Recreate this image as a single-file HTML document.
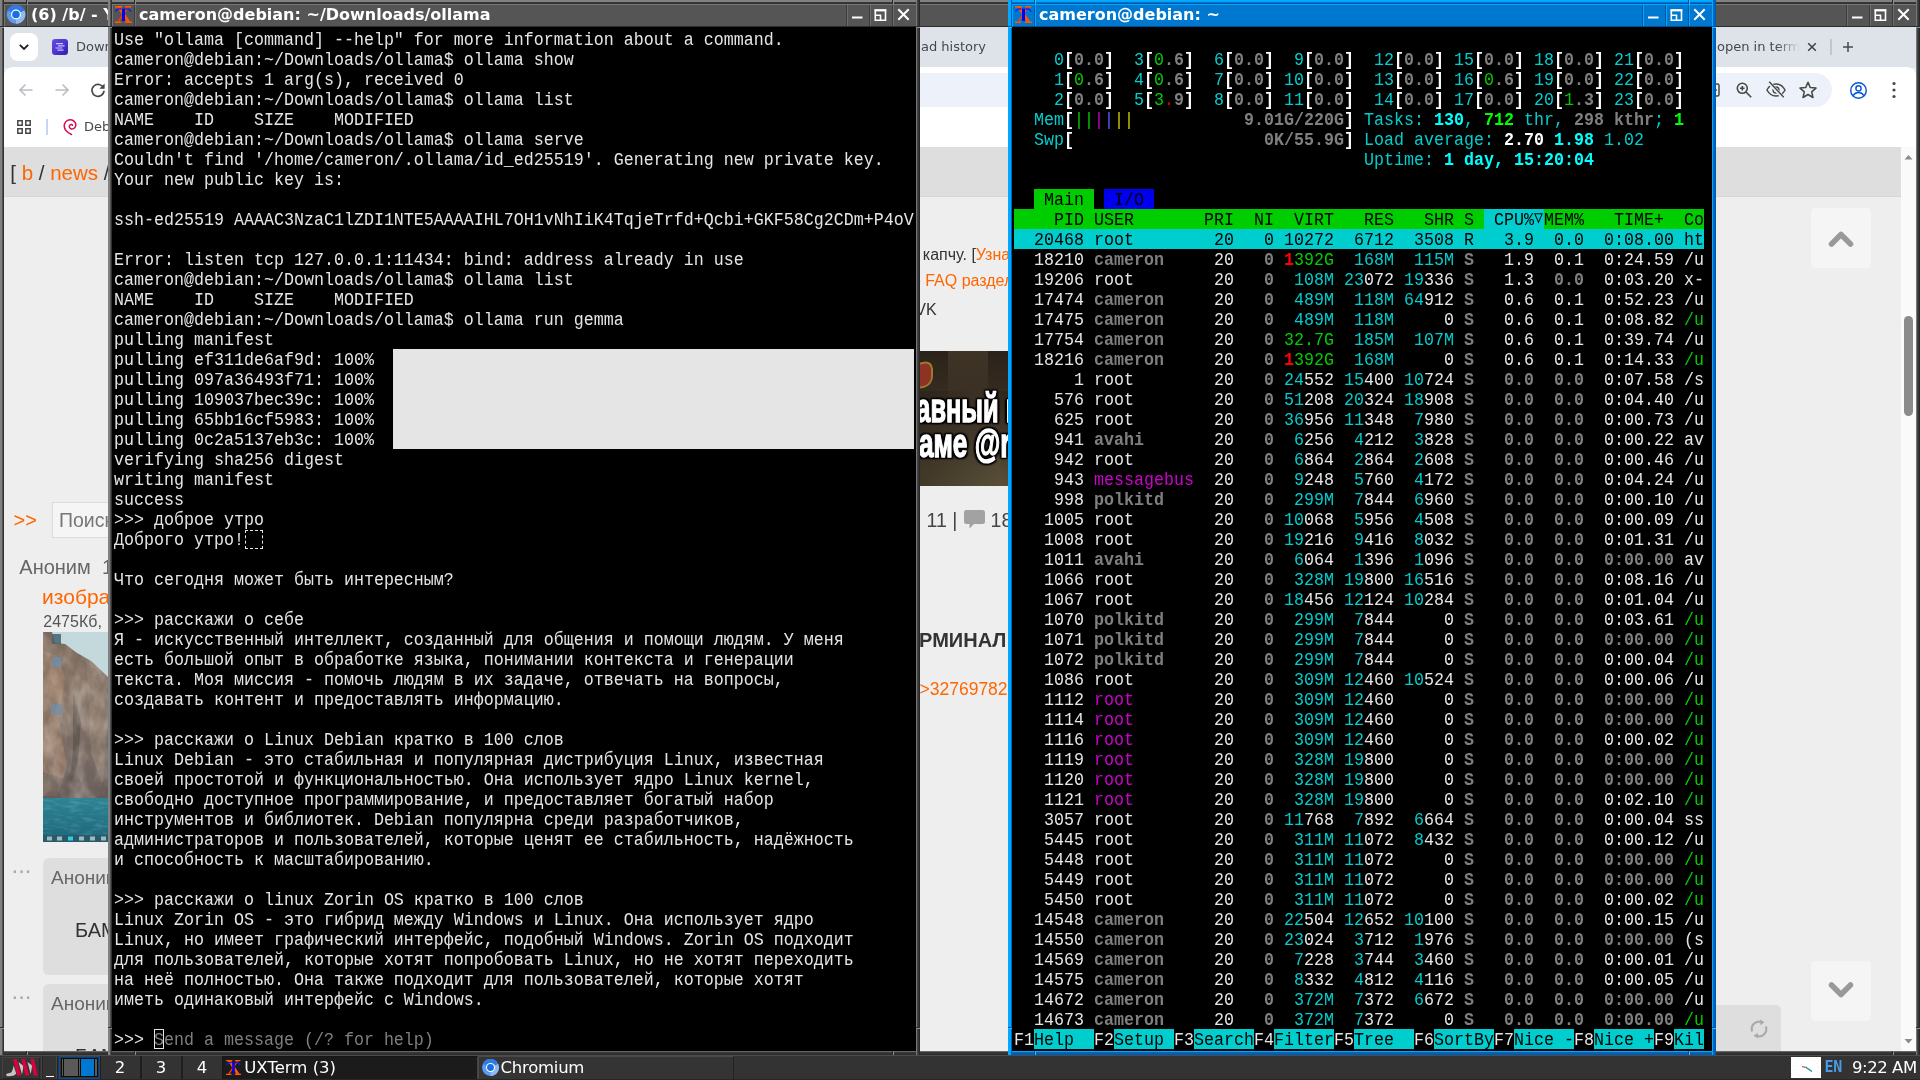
<!DOCTYPE html>
<html lang="ru">
<head>
<meta charset="utf-8">
<title>desktop</title>
<style>
*{box-sizing:border-box;margin:0;padding:0}
html,body{width:1920px;height:1080px;overflow:hidden;background:#333}
body{position:relative;font-family:"DejaVu Sans","Liberation Sans",sans-serif}
.abs{position:absolute}
/* ---------- window manager frames ---------- */
.win{position:absolute;top:0;height:1055px}
.win .fr{position:absolute;left:0;top:0;right:0;bottom:0;background:#555}
.win .fr i{position:absolute;display:block}
/* inactive frame pieces */
.fl{left:0;top:0;bottom:0;width:4px;background:linear-gradient(90deg,#838383 0,#808080 2px,#555 2.4px,#222 4px)}
.frr{right:0;top:0;bottom:0;width:4px;background:linear-gradient(90deg,#7a7a7a 0,#777 1.2px,#444 1.4px,#222 4px)}
.ft{left:0;top:0;right:0;height:4px;background:linear-gradient(180deg,#838383 0,#808080 1.800px,#3a3a3a 2.500px,#2b2b2b 4px)}
.fb{left:0;bottom:0;right:0;height:4px;background:linear-gradient(180deg,#666 0,#666 1px,#3a3a3a 1.3px,#2a2a2a 4px)}
.win.act .fr{background:#0078d2}
.win.act .fl{background:linear-gradient(90deg,#00aaff 0,#00a8ff 2.6px,#0068c0 3px,#0058ac 4px)}
.win.act .frr{background:linear-gradient(90deg,#00aaff 0,#00a8ff 1.2px,#0068c0 1.500px,#0058ac 4px)}
.win.act .ft{background:linear-gradient(180deg,#00aaff 0,#00a8ff 2.200px,#0060b8 2.600px,#0054a8 4px)}
.win.act .fb{background:linear-gradient(180deg,#00a8ff 0,#00a8ff 1px,#0068c0 1.300px,#0058ac 4px)}
.fr i::before,.fr i::after{content:"";position:absolute}
.ft::before,.ft::after,.fb::before,.fb::after{top:0;width:2px;height:4px;background:linear-gradient(90deg,#2b2b2b 50%,#8c8c8c 50%)}
.ft::before,.fb::before{left:26px}.ft::after,.fb::after{right:26px}
.fl::before,.fl::after,.frr::before,.frr::after{left:0;width:4px;height:2px;background:linear-gradient(180deg,#2b2b2b 50%,#8c8c8c 50%)}
.fl::before,.frr::before{top:26px}.fl::after,.frr::after{bottom:26px}
.win.act .ft::before,.win.act .ft::after,.win.act .fb::before,.win.act .fb::after{background:linear-gradient(90deg,#0054a8 50%,#35b8ff 50%)}
.win.act .fl::before,.win.act .fl::after,.win.act .frr::before,.win.act .frr::after{background:linear-gradient(180deg,#0054a8 50%,#35b8ff 50%)}
.tb{position:absolute;left:4px;right:4px;top:4px;height:23px;background:#555;border-top:1px solid #777;border-left:1px solid #777;border-bottom:1px solid #2b2b2b;color:#fff;font:bold 16px/21px "DejaVu Sans",sans-serif;white-space:nowrap;overflow:hidden;will-change:transform}
.win.act .tb{background:#0078d0;border-top-color:#00a6fa;border-left-color:#00a6fa;border-bottom-color:#004f94}
.tb .ic{position:absolute;left:.700px;top:-1px;width:21px;height:21px}
.tb .ic.x{left:2px;top:1px;width:17px;height:17px}
.tb .sep{position:absolute;top:0;bottom:0;width:2px;border-left:1px solid #3c3c3c;border-right:1px solid #6c6c6c}
.win.act .tb .sep{border-left-color:#0058a4;border-right-color:#00a6fa}
.tb .tt{position:absolute;left:26px;top:-1px}
.tb .btn{position:absolute;top:0;width:23px;height:21px}
.tb .btn svg{position:absolute;left:0;top:0}
/* ---------- terminals ---------- */
.term{position:absolute;left:4px;top:27px;right:4px;bottom:4px;background:#000;overflow:hidden;color:#e5e5e5;
 font:16.664px/20px "Liberation Mono","DejaVu Sans Mono",monospace;white-space:pre}
.term .in{position:absolute;left:2px;top:2px;right:0;bottom:0;will-change:transform}
.r{position:absolute;left:0;height:20px;width:820px;transform-origin:0 14.4px;transform:translateY(1.6px) scaleY(1.15)}
.ht .r span{position:absolute;top:0}
.g{color:#7f7f7f}
.G{color:#7f7f7f;font-weight:bold}
.c{color:#00cdcd}
.C{color:#00ffff;font-weight:bold}
.W{color:#fff;font-weight:bold}
.gr{color:#00cd00}
.GR{color:#00ff00;font-weight:bold}
.rd{color:#cd0000}
.RD{color:#ff0000;font-weight:bold}
.mg{color:#cd00cd}
.bl{color:#5c5cff}
.yl{color:#cdcd00}
.k,.k span{color:#000}
.fk{color:#e5e5e5}
.tri{font-size:15px}
.bg{position:absolute;height:20px}
.gbg{background:#00cd00}
.bbg{background:#0000ee}
.cbg{background:#00cdcd}
.pbar{position:absolute;left:279px;top:320px;width:521px;height:100px;background:#e5e5e5}
.ubox{position:absolute;left:131px;top:501px;width:18px;height:18.500px;border:1px dashed #e5e5e5}
.cur{position:absolute;left:40px;top:1000px;width:10px;height:20px;border:1px solid #e5e5e5}
.ui{font:13px/17px "DejaVu Sans","Liberation Sans",sans-serif;color:#45484d;white-space:nowrap}
.pt{font-family:"Liberation Sans",sans-serif;white-space:nowrap}
.o{color:#ff6600}
.meme{font:bold 40px/40px "Liberation Sans",sans-serif;color:#fff;white-space:nowrap;transform-origin:0 0;-webkit-text-stroke:1.4px #fff;text-shadow:-3px 0 2px #000,3px 0 2px #000,0 -2px 2px #000,0 2px 2px #000,3px 2px 2px #000,-3px -2px 2px #000,3px -2px 2px #000,-3px 2px 2px #000}
.tk{top:1px;font:16.5px/24px "DejaVu Sans",sans-serif;color:#fff;white-space:nowrap}
</style>
</head>
<body>

<!-- ======================= Chromium window (behind) ======================= -->
<div class="win" id="w-chromium" style="left:0;width:1920px">
 <div class="fr"><i class="ft"></i><i class="fb"></i><i class="fl"></i><i class="frr"></i></div>
 <div class="tb">
  <svg class="ic" viewBox="0 0 21 21"><circle cx="10" cy="10.5" r="9.3" fill="#5b9cf0"/><path d="M10 10.5 L1.5 6.5 A9.3 9.3 0 0 1 18.5 6.5 Z" fill="#2f7be5"/><path d="M10 10.5 L18.5 6.5 A9.3 9.3 0 0 1 10 19.8 Z" fill="#8db9f5"/><circle cx="10" cy="10.5" r="5" fill="#fff"/><circle cx="10" cy="10.5" r="3.8" fill="#1a6fe0"/></svg>
  <span class="sep" style="left:21px"></span>
  <span class="tt">(6) /b/ - Yoba</span>
  <span class="sep" style="left:1841px"></span>
  <span class="btn" style="left:1843px"><svg width="23" height="21" viewBox="0 0 23 21"><path d="M4 12.5h10.500" stroke="#fff" stroke-width="2"/></svg></span>
  <span class="sep" style="left:1864px"></span>
  <span class="btn" style="left:1866px"><svg width="23" height="21" viewBox="0 0 23 21"><path d="M4.300 5.300h10.200v10h-10.200zM4.300 10.300h5.200v5" fill="none" stroke="#fff" stroke-width="1.600"/><path d="M3.500 5.300h11.800" stroke="#fff" stroke-width="2.200"/></svg></span>
  <span class="sep" style="left:1887px"></span>
  <span class="btn" style="left:1889px"><svg width="23" height="21" viewBox="0 0 23 21"><path d="M4.300 4.300l10.400 10.400M14.700 4.300L4.300 14.700" stroke="#fff" stroke-width="2"/></svg></span>
 </div>
 <div class="abs" id="chrome" style="left:4px;top:27px;width:1912px;height:1024px;background:#eee;overflow:hidden;will-change:transform">
<div class="abs pg" style="left:-4px;top:-27px;width:1920px;height:1080px">
 <!-- tab strip -->
 <div class="abs" style="left:4px;top:27px;width:1912px;height:41px;background:#dee3ea"></div>
 <div class="abs" style="left:10px;top:33px;width:28px;height:28px;border-radius:8px;background:#fff"></div>
 <svg class="abs" style="left:10px;top:33px" width="28" height="28" viewBox="0 0 28 28"><path d="M9.8 11.8l4.2 4.2 4.2-4.2" fill="none" stroke="#1f1f1f" stroke-width="1.8"/></svg>
 <svg class="abs" style="left:52px;top:39px" width="16" height="16" viewBox="0 0 16 16"><defs><linearGradient id="fv" x1="0" y1="0" x2="1" y2="1"><stop offset="0" stop-color="#6a4be8"/><stop offset="1" stop-color="#2f1fb4"/></linearGradient></defs><rect width="16" height="16" rx="3.2" fill="url(#fv)"/><path d="M4 4.6h7M6 6.8h6.5M3.5 9h7M5.5 11.2h6" stroke="#c9c0ff" stroke-width="1.2"/></svg>
 <div class="abs ui" style="left:76px;top:37.800px">Down</div>
 <div class="abs ui" style="left:921px;top:37.700px">ad history</div>
 <div class="abs ui" style="left:1717px;top:37.700px;width:86px;overflow:hidden">open in terminal</div>
 <div class="abs" style="left:1776px;top:36px;width:28px;height:22px;background:linear-gradient(90deg,rgba(222,227,234,0),#dee3ea 85%)"></div>
 <svg class="abs" style="left:1806px;top:41px" width="12" height="12" viewBox="0 0 12 12"><path d="M2.2 2.2l7.6 7.6M9.8 2.2L2.2 9.8" stroke="#3c4043" stroke-width="1.5"/></svg>
 <div class="abs" style="left:1830px;top:39px;width:2px;height:16px;background:#c6c5c3"></div>
 <svg class="abs" style="left:1842px;top:41px" width="12" height="12" viewBox="0 0 12 12"><path d="M6 1v10M1 6h10" stroke="#474a4d" stroke-width="1.500"/></svg>
 <!-- toolbar -->
 <div class="abs" style="left:4px;top:67px;width:1912px;height:80px;background:#fff;border-radius:9px 9px 0 0"></div>
 <svg class="abs" style="left:16px;top:80px" width="20" height="20" viewBox="0 0 20 20"><path d="M16.5 10H4.5M9.5 4.5L4 10l5.500 5.500" fill="none" stroke="#bcbfc4" stroke-width="1.7"/></svg>
 <svg class="abs" style="left:52px;top:80px" width="20" height="20" viewBox="0 0 20 20"><path d="M3.500 10h12M10.500 4.500L16 10l-5.500 5.500" fill="none" stroke="#bcbfc4" stroke-width="1.7"/></svg>
 <svg class="abs" style="left:88px;top:80px" width="20" height="20" viewBox="0 0 20 20"><path d="M15.600 8.200A6 6 0 1 0 16 10.800" fill="none" stroke="#474747" stroke-width="1.7"/><path d="M16.600 3.600v5.200h-5.200z" fill="#474747"/></svg>
 <div class="abs" style="left:130px;top:73px;width:1702px;height:34px;border-radius:17px;background:#edf2fa"></div>
 <svg class="abs" style="left:1712px;top:81px" width="10" height="18" viewBox="0 0 10 18"><rect x="-4" y="3" width="11" height="12" rx="1.5" fill="none" stroke="#474747" stroke-width="1.5"/><path d="M1 9h4" stroke="#474747" stroke-width="1.5"/></svg>
 <svg class="abs" style="left:1734px;top:80px" width="20" height="20" viewBox="0 0 20 20"><circle cx="8.300" cy="8.300" r="5" fill="none" stroke="#474747" stroke-width="1.6"/><path d="M12 12l5.200 5.200M8.300 6v4.600M6 8.300h4.600" stroke="#474747" stroke-width="1.6"/></svg>
 <svg class="abs" style="left:1765px;top:80px" width="22" height="20" viewBox="0 0 24 22"><path d="M2 11c2.500-4.500 6-6.500 10-6.500s7.500 2 10 6.500c-2.500 4.500-6 6.500-10 6.500S4.500 15.500 2 11z" fill="none" stroke="#474747" stroke-width="1.6"/><circle cx="12" cy="11" r="3.200" fill="none" stroke="#474747" stroke-width="1.6"/><path d="M4 2.500l16 17" stroke="#edf2fa" stroke-width="4"/><path d="M4.500 2l16 17" stroke="#474747" stroke-width="1.6"/></svg>
 <svg class="abs" style="left:1798px;top:80px" width="20" height="20" viewBox="0 0 20 20"><path d="M10 2.300l2.300 5.300 5.700.5-4.300 3.800 1.300 5.600L10 14.500 5 17.500l1.300-5.600L2 8.100l5.700-.5z" fill="none" stroke="#474747" stroke-width="1.5" stroke-linejoin="round"/></svg>
 <svg class="abs" style="left:1848.500px;top:80.500px" width="19" height="19" viewBox="0 0 22 22"><circle cx="11" cy="11" r="9" fill="none" stroke="#0b57d0" stroke-width="1.7"/><circle cx="11" cy="8.600" r="3" fill="none" stroke="#0b57d0" stroke-width="1.7"/><path d="M4.800 17c1.500-2.500 3.700-3.600 6.200-3.600s4.700 1.100 6.200 3.600" fill="none" stroke="#0b57d0" stroke-width="1.700"/></svg>
 <svg class="abs" style="left:1890px;top:80px" width="8" height="20" viewBox="0 0 8 20"><circle cx="4" cy="3.500" r="1.600" fill="#474747"/><circle cx="4" cy="10" r="1.600" fill="#474747"/><circle cx="4" cy="16.500" r="1.600" fill="#474747"/></svg>
 <!-- bookmarks bar -->
 <svg class="abs" style="left:17px;top:120px" width="14" height="14" viewBox="0 0 14 14"><path d="M.8.800h4.400v4.400H.8zM8.800.800h4.400v4.400H8.800zM.8 8.800h4.400v4.400H.8zM8.800 8.800h4.400v4.400H8.800z" fill="none" stroke="#474747" stroke-width="1.5"/></svg>
 <div class="abs" style="left:46px;top:119px;width:2px;height:16px;background:#c7d6f7"></div>
 <svg class="abs" style="left:62px;top:118px" width="16" height="18" viewBox="0 0 16 18"><path d="M9.500 16.500C4 14 1.500 10 2.500 6 3.500 2.500 7 1 10 2c3 1 4.500 4 3.500 6.500-.8 2-3 3-4.800 2.200C7.200 10 6.800 8 8 7c.8-.7 2-.5 2.500.3" fill="none" stroke="#d70a53" stroke-width="1.500" stroke-linecap="round"/></svg>
 <div class="abs ui" style="left:84px;top:118px">Deb</div>
 <!-- page -->
 <div class="abs" style="left:4px;top:147px;width:1897px;height:50px;background:#dedede;border-bottom:1px solid #d6d6d6"></div>
 <div class="abs pt" style="left:10.300px;top:161.100px;font-size:20.500px;line-height:24px;color:#333">[ <span class="o">b</span> / <span class="o">news</span> / <span class="o">po</span></div>
 <!-- scrollbar -->
 <div class="abs" style="left:1901px;top:147px;width:15px;height:904px;background:#fafafa"></div>
 <svg class="abs" style="left:1901px;top:147px" width="15" height="20" viewBox="0 0 15 20"><path d="M3.500 12.500h8L7.500 8z" fill="#8b8b8b"/></svg>
 <svg class="abs" style="left:1901px;top:1031px" width="15" height="20" viewBox="0 0 15 20"><path d="M3.500 8h8L7.500 12.500z" fill="#8b8b8b"/></svg>
 <div class="abs" style="left:1904px;top:316px;width:9px;height:100px;border-radius:4.500px;background:#8b8b8b"></div>
 <!-- middle strip text -->
 <div class="abs pt" style="left:892.700px;top:244.500px;font-size:16px;line-height:20px;color:#333;width:300px">вве капчу. [<span class="o">Узнать</span>]</div>
 <div class="abs pt" style="left:915.400px;top:271.300px;font-size:16px;line-height:20px;color:#333;width:300px">- <span class="o">FAQ раздел</span></div>
 <div class="abs pt" style="left:905.500px;top:299.500px;font-size:16px;line-height:20px;color:#333;width:300px">- VK</div>
 <!-- middle image -->
 <div class="abs" style="left:820px;top:351px;width:260px;height:135px;overflow:hidden;background:linear-gradient(180deg,#2b2219 0,#352b20 30%,#453b2c 62%,#5a5039 100%)">
  <div class="abs" style="left:128px;top:0;width:40px;height:60px;background:linear-gradient(180deg,rgba(110,95,70,.3),rgba(110,95,70,0))"></div>
  <div class="abs" style="left:100px;top:40px;width:160px;height:95px;background:linear-gradient(75deg,rgba(20,15,10,.35) 0,rgba(20,15,10,0) 45%,rgba(25,20,12,.4) 75%,rgba(120,105,70,.25) 100%)"></div>
  <div class="abs" style="left:92px;top:11px;width:21px;height:26px;background:#8e3324;border:2px solid #9a7a30;border-radius:2px 9px 9px 2px;transform:skewY(-12deg)"></div>
  <div class="abs meme" style="left:67.100px;top:36.500px;transform:scaleX(.635)">Главный герой</div>
  <div class="abs meme" style="left:12.400px;top:72.400px;transform:scaleX(.654)">Телеграме @ru</div>
 </div>
 <div class="abs pt" style="left:926.600px;top:507.500px;font-size:19.500px;line-height:24px;color:#444">11 |</div>
 <svg class="abs" style="left:963px;top:509px" width="23" height="21" viewBox="0 0 23 21"><path d="M3.500 1h16a2.500 2.500 0 0 1 2.500 2.500v9a2.500 2.500 0 0 1-2.500 2.500H11l-4.500 4.500V15H3.500A2.500 2.500 0 0 1 1 12.500v-9A2.500 2.500 0 0 1 3.500 1z" fill="#a2a2a2"/></svg>
 <div class="abs pt" style="left:990.600px;top:507.500px;font-size:19.500px;line-height:24px;color:#444">18</div>
 <div class="abs pt" style="left:880px;top:628px;width:300px;font-size:20px;line-height:24px;color:#333;font-weight:bold"><span style="position:absolute;right:173.600px;top:-.500px;white-space:nowrap">ТЕРМИНАЛ</span></div>
 <div class="abs pt o" style="left:919.500px;top:678px;font-size:17.500px;line-height:22px">&gt;32769782</div>
 <!-- left strip -->
 <div class="abs pt o" style="left:13.500px;top:508px;font-size:20px;line-height:24px">&gt;&gt;</div>
 <div class="abs" style="left:52px;top:502px;width:300px;height:36px;background:#f5f5f5;border:1px solid #dcdcdc"></div>
 <div class="abs pt" style="left:59px;top:508px;font-size:19.500px;line-height:24px;color:#777">Поиск</div>
 <div class="abs pt" style="left:19.300px;top:555.400px;font-size:20px;line-height:24px;color:#666">Аноним&nbsp; 15</div>
 <div class="abs pt o" style="left:42.100px;top:586px;font-size:21px;line-height:22px">изображение</div>
 <div class="abs pt" style="left:43.300px;top:610.700px;font-size:16px;line-height:22px;color:#555">2475Кб,</div>
 <svg class="abs" style="left:43px;top:632px" width="160" height="210" viewBox="0 0 160 210">
  <defs>
   <linearGradient id="rk" x1="0" y1="0" x2="0" y2="1"><stop offset="0" stop-color="#857062"/><stop offset=".35" stop-color="#8f7c6d"/><stop offset=".7" stop-color="#80716a"/><stop offset="1" stop-color="#675d59"/></linearGradient>
   <linearGradient id="sea" x1="0" y1="0" x2="0" y2="1"><stop offset="0" stop-color="#2e8494"/><stop offset="1" stop-color="#1e6a7e"/></linearGradient>
   <filter id="nz" x="0" y="0" width="100%" height="100%"><feTurbulence type="fractalNoise" baseFrequency=".09 .05" numOctaves="3" seed="7"/><feColorMatrix type="matrix" values="0 0 0 0 .1  0 0 0 0 .08  0 0 0 0 .07  1.6 0 0 0 -.55"/></filter>
   <filter id="nz3" x="0" y="0" width="100%" height="100%"><feTurbulence type="fractalNoise" baseFrequency=".07 .04" numOctaves="3" seed="21"/><feColorMatrix type="matrix" values="0 0 0 0 .8  0 0 0 0 .72  0 0 0 0 .64  1.6 0 0 0 -.6"/></filter>
   <filter id="nz2" x="0" y="0" width="100%" height="100%"><feTurbulence type="fractalNoise" baseFrequency=".08 .3" numOctaves="2" seed="3"/><feColorMatrix type="matrix" values="0 0 0 0 .75  0 0 0 0 .95  0 0 0 0 1  1.2 0 0 0 -.55"/></filter>
  </defs>
  <rect width="160" height="210" fill="#c3d9dc"/>
  <path d="M0 0h9l3 11 10 1 12 9 14 8 17 16 20 20 30 10 45 20V170H0z" fill="url(#rk)"/>
  <path d="M0 18l14 6 8 22-6 40 8 50-10 28H0z" fill="#b08d72" opacity=".55"/>
  <path d="M30 60l8 30-4 50 10 26H26l4-50z" fill="#514944" opacity=".55"/>
  <path d="M44 40l14 12 7 40-5 60-12-30z" fill="#a3917f" opacity=".45"/>
  <path d="M0 140l30 10 35 8v12H0z" fill="#6d615b" opacity=".6"/>
  <rect width="160" height="166" filter="url(#nz)" opacity=".55" style="clip-path:polygon(0 0,9px 0,12px 11px,22px 12px,34px 21px,48px 29px,65px 45px,85px 65px,115px 75px,160px 95px,160px 166px,0 166px)"/>
  <rect width="160" height="166" filter="url(#nz3)" opacity=".5" style="clip-path:polygon(0 0,9px 0,12px 11px,22px 12px,34px 21px,48px 29px,65px 45px,85px 65px,115px 75px,160px 95px,160px 166px,0 166px)"/>
  <rect x="9" y="2" width="9" height="10" fill="#44626f" opacity=".85"/>
  <rect x="9" y="25" width="9" height="10" fill="#6c8fae" opacity=".75"/>
  <rect x="8" y="72" width="11" height="11" fill="#6c8fae" opacity=".65"/>
  <rect y="166" width="160" height="38" fill="url(#sea)"/>
  <rect y="166" width="160" height="38" filter="url(#nz2)" opacity=".35"/>
  <rect y="203" width="160" height="7" fill="#285a69"/>
  <path d="M4 206.500h5M14 206.500h5M36 206.500h5M47 206.500h5M58 206.500h5" stroke="#9fb9c0" stroke-width="4"/><path d="M25 206.500h5" stroke="#28d0e0" stroke-width="4"/>
 </svg>

 <div class="abs pt" style="left:11.500px;top:854.100px;font-size:24px;line-height:22px;color:#aaa">...</div>
 <div class="abs" style="left:43px;top:858px;width:640px;height:116.500px;border-radius:6px;background:#dedede"></div>
 <div class="abs pt" style="left:51px;top:867px;font-size:19px;line-height:22px;color:#666">Аноним</div>
 <div class="abs pt" style="left:75px;top:918px;font-size:20px;line-height:24px;color:#333">БАМП</div>
 <div class="abs pt" style="left:11.500px;top:980.300px;font-size:24px;line-height:22px;color:#aaa">...</div>
 <div class="abs" style="left:43px;top:984px;width:640px;height:116.500px;border-radius:6px;background:#dedede"></div>
 <div class="abs pt" style="left:51px;top:993px;font-size:19px;line-height:22px;color:#666">Аноним</div>
 <div class="abs pt" style="left:75px;top:1044px;font-size:20px;line-height:24px;color:#333">БАМП</div>
 <!-- right strip -->
 <div class="abs" style="left:1811px;top:208px;width:60px;height:60px;border-radius:4px;background:#f5f5f5"></div>
 <svg class="abs" style="left:1811px;top:208px" width="60" height="60" viewBox="0 0 60 60"><path d="M20.500 36L30 26.500l9.500 9.500" fill="none" stroke="#999" stroke-width="5.500" stroke-linecap="round" stroke-linejoin="round"/></svg>
 <div class="abs" style="left:1811px;top:961px;width:60px;height:60px;border-radius:4px;background:#f5f5f5"></div>
 <svg class="abs" style="left:1811px;top:961px" width="60" height="60" viewBox="0 0 60 60"><path d="M20.500 24L30 33.500l9.500-9.500" fill="none" stroke="#999" stroke-width="5.500" stroke-linecap="round" stroke-linejoin="round"/></svg>
 <div class="abs" style="left:1600px;top:1005px;width:181px;height:60px;border-radius:0 5px 0 0;background:#dedede"></div>
 <svg class="abs" style="left:1747px;top:1017px" width="24" height="24" viewBox="0 0 24 24"><path d="M5.200 14.500A7.200 7.200 0 0 1 14.500 5.200M18.800 9.500A7.200 7.200 0 0 1 9.500 18.800" fill="none" stroke="#aaa" stroke-width="2.200"/><path d="M13 2.500l4.500 2.700-4 3zM11 21.500l-4.500-2.700 4-3z" fill="#aaa"/></svg>
</div>

 </div>
</div>

<!-- ======================= left terminal (ollama) ======================= -->
<div class="win" id="w-ollama" style="left:108px;width:812px">
 <div class="fr"><i class="ft"></i><i class="fb"></i><i class="fl"></i><i class="frr"></i></div>
 <div class="tb">
  <svg class="ic x" viewBox="0 0 17 17"><path d="M0 .8h7.2M10 .8h6.3M0 16.2h6.2M10 16.2h7" stroke="#ff5a00" stroke-width="1.5"/><path d="M2.2 1h3.6l9.6 15h-3.8z" fill="#ff5500"/><path d="M13.2 1.2L3 16" stroke="#ff3a00" stroke-width="1.5"/><path d="M6.4 3C4 2.6 1.4 3.6.6 5.8M10.6 3c2.4-.4 4.6.6 5.4 2.8" stroke="#0020ff" stroke-width="1.400" fill="none"/><rect x="7" y="2.6" width="3" height="12.2" fill="#0000ff"/></svg>
  <span class="sep" style="left:21px"></span>
  <span class="tt">cameron@debian: ~/Downloads/ollama</span>
  <span class="sep" style="left:733px"></span>
  <span class="btn" style="left:735px"><svg width="23" height="21" viewBox="0 0 23 21"><path d="M4 12.5h10.500" stroke="#fff" stroke-width="2"/></svg></span>
  <span class="sep" style="left:756px"></span>
  <span class="btn" style="left:758px"><svg width="23" height="21" viewBox="0 0 23 21"><path d="M4.300 5.300h10.200v10h-10.200zM4.300 10.300h5.200v5" fill="none" stroke="#fff" stroke-width="1.600"/><path d="M3.500 5.300h11.800" stroke="#fff" stroke-width="2.200"/></svg></span>
  <span class="sep" style="left:779px"></span>
  <span class="btn" style="left:781px"><svg width="23" height="21" viewBox="0 0 23 21"><path d="M4.300 4.300l10.400 10.400M14.700 4.300L4.300 14.700" stroke="#fff" stroke-width="2"/></svg></span>
 </div>
 <div class="term"><div class="in">
<div class="r" style="top:0px">Use "ollama [command] --help" for more information about a command.</div>
<div class="r" style="top:20px">cameron@debian:~/Downloads/ollama$ ollama show</div>
<div class="r" style="top:40px">Error: accepts 1 arg(s), received 0</div>
<div class="r" style="top:60px">cameron@debian:~/Downloads/ollama$ ollama list</div>
<div class="r" style="top:80px">NAME    ID    SIZE    MODIFIED</div>
<div class="r" style="top:100px">cameron@debian:~/Downloads/ollama$ ollama serve</div>
<div class="r" style="top:120px">Couldn't find '/home/cameron/.ollama/id_ed25519'. Generating new private key.</div>
<div class="r" style="top:140px">Your new public key is:</div>
<div class="r" style="top:180px">ssh-ed25519 AAAAC3NzaC1lZDI1NTE5AAAAIHL7OH1vNhIiK4TqjeTrfd+Qcbi+GKF58Cg2CDm+P4oV</div>
<div class="r" style="top:220px">Error: listen tcp 127.0.0.1:11434: bind: address already in use</div>
<div class="r" style="top:240px">cameron@debian:~/Downloads/ollama$ ollama list</div>
<div class="r" style="top:260px">NAME    ID    SIZE    MODIFIED</div>
<div class="r" style="top:280px">cameron@debian:~/Downloads/ollama$ ollama run gemma</div>
<div class="r" style="top:300px">pulling manifest</div>
<div class="r" style="top:320px">pulling ef311de6af9d: 100%</div>
<div class="r" style="top:340px">pulling 097a36493f71: 100%</div>
<div class="r" style="top:360px">pulling 109037bec39c: 100%</div>
<div class="r" style="top:380px">pulling 65bb16cf5983: 100%</div>
<div class="r" style="top:400px">pulling 0c2a5137eb3c: 100%</div>
<div class="r" style="top:420px">verifying sha256 digest</div>
<div class="r" style="top:440px">writing manifest</div>
<div class="r" style="top:460px">success</div>
<div class="r" style="top:480px">&gt;&gt;&gt; доброе утро</div>
<div class="r" style="top:500px">Доброго утро!</div>
<div class="r" style="top:540px">Что сегодня может быть интересным?</div>
<div class="r" style="top:580px">&gt;&gt;&gt; расскажи о себе</div>
<div class="r" style="top:600px">Я - искусственный интеллект, созданный для общения и помощи людям. У меня</div>
<div class="r" style="top:620px">есть большой опыт в обработке языка, понимании контекста и генерации</div>
<div class="r" style="top:640px">текста. Моя миссия - помочь людям в их задаче, отвечать на вопросы,</div>
<div class="r" style="top:660px">создавать контент и предоставлять информацию.</div>
<div class="r" style="top:700px">&gt;&gt;&gt; расскажи о Linux Debian кратко в 100 слов</div>
<div class="r" style="top:720px">Linux Debian - это стабильная и популярная дистрибуция Linux, известная</div>
<div class="r" style="top:740px">своей простотой и функциональностью. Она использует ядро Linux kernel,</div>
<div class="r" style="top:760px">свободно доступное программирование, и предоставляет богатый набор</div>
<div class="r" style="top:780px">инструментов и библиотек. Debian популярна среди разработчиков,</div>
<div class="r" style="top:800px">администраторов и пользователей, которые ценят ее стабильность, надёжность</div>
<div class="r" style="top:820px">и способность к масштабированию.</div>
<div class="r" style="top:860px">&gt;&gt;&gt; расскажи о linux Zorin OS кратко в 100 слов</div>
<div class="r" style="top:880px">Linux Zorin OS - это гибрид между Windows и Linux. Она использует ядро</div>
<div class="r" style="top:900px">Linux, но имеет графический интерфейс, подобный Windows. Zorin OS подходит</div>
<div class="r" style="top:920px">для пользователей, которые хотят попробовать Linux, но не хотят переходить</div>
<div class="r" style="top:940px">на неё полностью. Она также подходит для пользователей, которые хотят</div>
<div class="r" style="top:960px">иметь одинаковый интерфейс с Windows.</div>
<div class="r" style="top:1000px">&gt;&gt;&gt; <span class="g">Send a message (/? for help)</span></div>
<div class="pbar"></div>
<div class="ubox"></div>
<div class="cur"></div>
 </div></div>
</div>

<!-- ======================= right terminal (htop) ======================= -->
<div class="win act" id="w-htop" style="left:1008px;width:708px">
 <div class="fr"><i class="ft"></i><i class="fb"></i><i class="fl"></i><i class="frr"></i></div>
 <div class="tb">
  <svg class="ic x" viewBox="0 0 17 17"><path d="M0 .8h7.2M10 .8h6.3M0 16.2h6.2M10 16.2h7" stroke="#ff5a00" stroke-width="1.5"/><path d="M2.2 1h3.6l9.6 15h-3.8z" fill="#ff5500"/><path d="M13.2 1.2L3 16" stroke="#ff3a00" stroke-width="1.5"/><path d="M6.4 3C4 2.6 1.4 3.6.6 5.8M10.6 3c2.4-.4 4.6.6 5.4 2.8" stroke="#0020ff" stroke-width="1.400" fill="none"/><rect x="7" y="2.6" width="3" height="12.2" fill="#0000ff"/></svg>
  <span class="sep" style="left:21px"></span>
  <span class="tt">cameron@debian: ~</span>
  <span class="sep" style="left:629px"></span>
  <span class="btn" style="left:631px"><svg width="23" height="21" viewBox="0 0 23 21"><path d="M4 12.5h10.500" stroke="#fff" stroke-width="2"/></svg></span>
  <span class="sep" style="left:652px"></span>
  <span class="btn" style="left:654px"><svg width="23" height="21" viewBox="0 0 23 21"><path d="M4.300 5.300h10.200v10h-10.200zM4.300 10.300h5.200v5" fill="none" stroke="#fff" stroke-width="1.600"/><path d="M3.500 5.300h11.800" stroke="#fff" stroke-width="2.200"/></svg></span>
  <span class="sep" style="left:675px"></span>
  <span class="btn" style="left:677px"><svg width="23" height="21" viewBox="0 0 23 21"><path d="M4.300 4.300l10.400 10.400M14.700 4.300L4.300 14.700" stroke="#fff" stroke-width="2"/></svg></span>
 </div>
 <div class="term ht"><div class="in">
<div class="r" style="top:20px"><span class="c" style="left:40px">0</span><span class="W" style="left:50px">[</span><span class="G" style="left:60px">0.0</span><span class="W" style="left:90px">]</span><span class="c" style="left:120px">3</span><span class="W" style="left:130px">[</span><span class="gr" style="left:140px">0</span><span class="G" style="left:150px">.6</span><span class="W" style="left:170px">]</span><span class="c" style="left:200px">6</span><span class="W" style="left:210px">[</span><span class="G" style="left:220px">0.0</span><span class="W" style="left:250px">]</span><span class="c" style="left:280px">9</span><span class="W" style="left:290px">[</span><span class="G" style="left:300px">0.0</span><span class="W" style="left:330px">]</span><span class="c" style="left:360px">12</span><span class="W" style="left:380px">[</span><span class="G" style="left:390px">0.0</span><span class="W" style="left:420px">]</span><span class="c" style="left:440px">15</span><span class="W" style="left:460px">[</span><span class="G" style="left:470px">0.0</span><span class="W" style="left:500px">]</span><span class="c" style="left:520px">18</span><span class="W" style="left:540px">[</span><span class="G" style="left:550px">0.0</span><span class="W" style="left:580px">]</span><span class="c" style="left:600px">21</span><span class="W" style="left:620px">[</span><span class="G" style="left:630px">0.0</span><span class="W" style="left:660px">]</span></div>
<div class="r" style="top:40px"><span class="c" style="left:40px">1</span><span class="W" style="left:50px">[</span><span class="gr" style="left:60px">0</span><span class="G" style="left:70px">.6</span><span class="W" style="left:90px">]</span><span class="c" style="left:120px">4</span><span class="W" style="left:130px">[</span><span class="gr" style="left:140px">0</span><span class="G" style="left:150px">.6</span><span class="W" style="left:170px">]</span><span class="c" style="left:200px">7</span><span class="W" style="left:210px">[</span><span class="G" style="left:220px">0.0</span><span class="W" style="left:250px">]</span><span class="c" style="left:270px">10</span><span class="W" style="left:290px">[</span><span class="G" style="left:300px">0.0</span><span class="W" style="left:330px">]</span><span class="c" style="left:360px">13</span><span class="W" style="left:380px">[</span><span class="G" style="left:390px">0.0</span><span class="W" style="left:420px">]</span><span class="c" style="left:440px">16</span><span class="W" style="left:460px">[</span><span class="gr" style="left:470px">0</span><span class="G" style="left:480px">.6</span><span class="W" style="left:500px">]</span><span class="c" style="left:520px">19</span><span class="W" style="left:540px">[</span><span class="G" style="left:550px">0.0</span><span class="W" style="left:580px">]</span><span class="c" style="left:600px">22</span><span class="W" style="left:620px">[</span><span class="G" style="left:630px">0.0</span><span class="W" style="left:660px">]</span></div>
<div class="r" style="top:60px"><span class="c" style="left:40px">2</span><span class="W" style="left:50px">[</span><span class="G" style="left:60px">0.0</span><span class="W" style="left:90px">]</span><span class="c" style="left:120px">5</span><span class="W" style="left:130px">[</span><span class="gr" style="left:140px">3</span><span class="rd" style="left:150px">.</span><span class="G" style="left:160px">9</span><span class="W" style="left:170px">]</span><span class="c" style="left:200px">8</span><span class="W" style="left:210px">[</span><span class="G" style="left:220px">0.0</span><span class="W" style="left:250px">]</span><span class="c" style="left:270px">11</span><span class="W" style="left:290px">[</span><span class="G" style="left:300px">0.0</span><span class="W" style="left:330px">]</span><span class="c" style="left:360px">14</span><span class="W" style="left:380px">[</span><span class="G" style="left:390px">0.0</span><span class="W" style="left:420px">]</span><span class="c" style="left:440px">17</span><span class="W" style="left:460px">[</span><span class="G" style="left:470px">0.0</span><span class="W" style="left:500px">]</span><span class="c" style="left:520px">20</span><span class="W" style="left:540px">[</span><span class="gr" style="left:550px">1</span><span class="G" style="left:560px">.3</span><span class="W" style="left:580px">]</span><span class="c" style="left:600px">23</span><span class="W" style="left:620px">[</span><span class="G" style="left:630px">0.0</span><span class="W" style="left:660px">]</span></div>
<div class="r" style="top:80px"><span class="c" style="left:20px">Mem</span><span class="W" style="left:50px">[</span><span class="gr" style="left:60px">||</span><span class="mg" style="left:80px">|</span><span class="bl" style="left:90px">|</span><span class="yl" style="left:100px">||</span><span class="G" style="left:230px">9.01G/220G</span><span class="W" style="left:330px">]</span><span class="c" style="left:350px">Tasks: </span><span class="C" style="left:420px">130</span><span class="c" style="left:450px">,</span><span class="GR" style="left:470px">712</span><span class="c" style="left:510px">thr,</span><span class="G" style="left:560px">298 kthr</span><span class="c" style="left:640px">;</span><span class="GR" style="left:660px">1</span></div>
<div class="r" style="top:100px"><span class="c" style="left:20px">Swp</span><span class="W" style="left:50px">[</span><span class="G" style="left:250px">0K/55.9G</span><span class="W" style="left:330px">]</span><span class="c" style="left:350px">Load average: </span><span class="W" style="left:490px">2.70</span><span class="C" style="left:540px">1.98</span><span class="c" style="left:590px">1.02</span></div>
<div class="r" style="top:120px"><span class="c" style="left:350px">Uptime: </span><span class="C" style="left:430px">1 day, 15:20:04</span></div>
<div class="bg gbg" style="top:160px;left:20px;width:60px"></div>
<div class="bg bbg" style="top:160px;left:90px;width:50px"></div>
<div class="r k" style="top:160px"><span style="left:30px">Main</span><span style="left:100px">I/O</span></div>
<div class="bg gbg" style="top:180px;left:0;width:690px"></div>
<div class="bg cbg" style="top:180px;left:470px;width:60px"></div>
<div class="r k" style="top:180px"><span style="left:40px">PID</span><span style="left:80px">USER</span><span style="left:190px">PRI</span><span style="left:240px">NI</span><span style="left:280px">VIRT</span><span style="left:350px">RES</span><span style="left:410px">SHR</span><span style="left:450px">S</span><span style="left:480px">CPU%</span><span class="tri" style="left:520px">▽</span><span style="left:530px">MEM%</span><span style="left:600px">TIME+</span><span style="left:670px">Co</span></div>
<div class="bg cbg" style="top:200px;left:0;width:690px"></div>
<div class="r k" style="top:200px"><span style="left:20px">20468</span><span style="left:80px">root</span><span style="left:200px">20</span><span style="left:250px">0</span><span style="left:270px">10272</span><span style="left:340px">6712</span><span style="left:400px">3508</span><span style="left:450px">R</span><span style="left:490px">3.9</span><span style="left:540px">0.0</span><span style="left:590px">0:08.00</span><span style="left:670px">ht</span></div>
<div class="r" style="top:220px"><span style="left:20px">18210</span><span class="G" style="left:80px">cameron</span><span style="left:200px">20</span><span class="G" style="left:250px">0</span><span class="RD" style="left:270px">1</span><span class="gr" style="left:280px">392G</span><span class="c" style="left:340px">168M</span><span class="c" style="left:400px">115M</span><span class="G" style="left:450px">S</span><span style="left:490px">1.9</span><span style="left:540px">0.1</span><span style="left:590px">0:24.59</span><span style="left:670px">/u</span></div>
<div class="r" style="top:240px"><span style="left:20px">19206</span><span style="left:80px">root</span><span style="left:200px">20</span><span class="G" style="left:250px">0</span><span class="c" style="left:280px">108M</span><span class="c" style="left:330px">23</span><span style="left:350px">072</span><span class="c" style="left:390px">19</span><span style="left:410px">336</span><span class="G" style="left:450px">S</span><span style="left:490px">1.3</span><span class="G" style="left:540px">0.0</span><span style="left:590px">0:03.20</span><span style="left:670px">x-</span></div>
<div class="r" style="top:260px"><span style="left:20px">17474</span><span class="G" style="left:80px">cameron</span><span style="left:200px">20</span><span class="G" style="left:250px">0</span><span class="c" style="left:280px">489M</span><span class="c" style="left:340px">118M</span><span class="c" style="left:390px">64</span><span style="left:410px">912</span><span class="G" style="left:450px">S</span><span style="left:490px">0.6</span><span style="left:540px">0.1</span><span style="left:590px">0:52.23</span><span style="left:670px">/u</span></div>
<div class="r" style="top:280px"><span style="left:20px">17475</span><span class="G" style="left:80px">cameron</span><span style="left:200px">20</span><span class="G" style="left:250px">0</span><span class="c" style="left:280px">489M</span><span class="c" style="left:340px">118M</span><span style="left:430px">0</span><span class="G" style="left:450px">S</span><span style="left:490px">0.6</span><span style="left:540px">0.1</span><span style="left:590px">0:08.82</span><span class="gr" style="left:670px">/u</span></div>
<div class="r" style="top:300px"><span style="left:20px">17754</span><span class="G" style="left:80px">cameron</span><span style="left:200px">20</span><span class="G" style="left:250px">0</span><span class="gr" style="left:270px">32.7G</span><span class="c" style="left:340px">185M</span><span class="c" style="left:400px">107M</span><span class="G" style="left:450px">S</span><span style="left:490px">0.6</span><span style="left:540px">0.1</span><span style="left:590px">0:39.74</span><span style="left:670px">/u</span></div>
<div class="r" style="top:320px"><span style="left:20px">18216</span><span class="G" style="left:80px">cameron</span><span style="left:200px">20</span><span class="G" style="left:250px">0</span><span class="RD" style="left:270px">1</span><span class="gr" style="left:280px">392G</span><span class="c" style="left:340px">168M</span><span style="left:430px">0</span><span class="G" style="left:450px">S</span><span style="left:490px">0.6</span><span style="left:540px">0.1</span><span style="left:590px">0:14.33</span><span class="gr" style="left:670px">/u</span></div>
<div class="r" style="top:340px"><span style="left:60px">1</span><span style="left:80px">root</span><span style="left:200px">20</span><span class="G" style="left:250px">0</span><span class="c" style="left:270px">24</span><span style="left:290px">552</span><span class="c" style="left:330px">15</span><span style="left:350px">400</span><span class="c" style="left:390px">10</span><span style="left:410px">724</span><span class="G" style="left:450px">S</span><span class="G" style="left:490px">0.0</span><span class="G" style="left:540px">0.0</span><span style="left:590px">0:07.58</span><span style="left:670px">/s</span></div>
<div class="r" style="top:360px"><span style="left:40px">576</span><span style="left:80px">root</span><span style="left:200px">20</span><span class="G" style="left:250px">0</span><span class="c" style="left:270px">51</span><span style="left:290px">208</span><span class="c" style="left:330px">20</span><span style="left:350px">324</span><span class="c" style="left:390px">18</span><span style="left:410px">908</span><span class="G" style="left:450px">S</span><span class="G" style="left:490px">0.0</span><span class="G" style="left:540px">0.0</span><span style="left:590px">0:04.40</span><span style="left:670px">/u</span></div>
<div class="r" style="top:380px"><span style="left:40px">625</span><span style="left:80px">root</span><span style="left:200px">20</span><span class="G" style="left:250px">0</span><span class="c" style="left:270px">36</span><span style="left:290px">956</span><span class="c" style="left:330px">11</span><span style="left:350px">348</span><span class="c" style="left:400px">7</span><span style="left:410px">980</span><span class="G" style="left:450px">S</span><span class="G" style="left:490px">0.0</span><span class="G" style="left:540px">0.0</span><span style="left:590px">0:00.73</span><span style="left:670px">/u</span></div>
<div class="r" style="top:400px"><span style="left:40px">941</span><span class="G" style="left:80px">avahi</span><span style="left:200px">20</span><span class="G" style="left:250px">0</span><span class="c" style="left:280px">6</span><span style="left:290px">256</span><span class="c" style="left:340px">4</span><span style="left:350px">212</span><span class="c" style="left:400px">3</span><span style="left:410px">828</span><span class="G" style="left:450px">S</span><span class="G" style="left:490px">0.0</span><span class="G" style="left:540px">0.0</span><span style="left:590px">0:00.22</span><span style="left:670px">av</span></div>
<div class="r" style="top:420px"><span style="left:40px">942</span><span style="left:80px">root</span><span style="left:200px">20</span><span class="G" style="left:250px">0</span><span class="c" style="left:280px">6</span><span style="left:290px">864</span><span class="c" style="left:340px">2</span><span style="left:350px">864</span><span class="c" style="left:400px">2</span><span style="left:410px">608</span><span class="G" style="left:450px">S</span><span class="G" style="left:490px">0.0</span><span class="G" style="left:540px">0.0</span><span style="left:590px">0:00.46</span><span style="left:670px">/u</span></div>
<div class="r" style="top:440px"><span style="left:40px">943</span><span class="mg" style="left:80px">messagebus</span><span style="left:200px">20</span><span class="G" style="left:250px">0</span><span class="c" style="left:280px">9</span><span style="left:290px">248</span><span class="c" style="left:340px">5</span><span style="left:350px">760</span><span class="c" style="left:400px">4</span><span style="left:410px">172</span><span class="G" style="left:450px">S</span><span class="G" style="left:490px">0.0</span><span class="G" style="left:540px">0.0</span><span style="left:590px">0:04.24</span><span style="left:670px">/u</span></div>
<div class="r" style="top:460px"><span style="left:40px">998</span><span class="G" style="left:80px">polkitd</span><span style="left:200px">20</span><span class="G" style="left:250px">0</span><span class="c" style="left:280px">299M</span><span class="c" style="left:340px">7</span><span style="left:350px">844</span><span class="c" style="left:400px">6</span><span style="left:410px">960</span><span class="G" style="left:450px">S</span><span class="G" style="left:490px">0.0</span><span class="G" style="left:540px">0.0</span><span style="left:590px">0:00.10</span><span style="left:670px">/u</span></div>
<div class="r" style="top:480px"><span style="left:30px">1005</span><span style="left:80px">root</span><span style="left:200px">20</span><span class="G" style="left:250px">0</span><span class="c" style="left:270px">10</span><span style="left:290px">068</span><span class="c" style="left:340px">5</span><span style="left:350px">956</span><span class="c" style="left:400px">4</span><span style="left:410px">508</span><span class="G" style="left:450px">S</span><span class="G" style="left:490px">0.0</span><span class="G" style="left:540px">0.0</span><span style="left:590px">0:00.09</span><span style="left:670px">/u</span></div>
<div class="r" style="top:500px"><span style="left:30px">1008</span><span style="left:80px">root</span><span style="left:200px">20</span><span class="G" style="left:250px">0</span><span class="c" style="left:270px">19</span><span style="left:290px">216</span><span class="c" style="left:340px">9</span><span style="left:350px">416</span><span class="c" style="left:400px">8</span><span style="left:410px">032</span><span class="G" style="left:450px">S</span><span class="G" style="left:490px">0.0</span><span class="G" style="left:540px">0.0</span><span style="left:590px">0:01.31</span><span style="left:670px">/u</span></div>
<div class="r" style="top:520px"><span style="left:30px">1011</span><span class="G" style="left:80px">avahi</span><span style="left:200px">20</span><span class="G" style="left:250px">0</span><span class="c" style="left:280px">6</span><span style="left:290px">064</span><span class="c" style="left:340px">1</span><span style="left:350px">396</span><span class="c" style="left:400px">1</span><span style="left:410px">096</span><span class="G" style="left:450px">S</span><span class="G" style="left:490px">0.0</span><span class="G" style="left:540px">0.0</span><span class="G" style="left:590px">0:00.00</span><span style="left:670px">av</span></div>
<div class="r" style="top:540px"><span style="left:30px">1066</span><span style="left:80px">root</span><span style="left:200px">20</span><span class="G" style="left:250px">0</span><span class="c" style="left:280px">328M</span><span class="c" style="left:330px">19</span><span style="left:350px">800</span><span class="c" style="left:390px">16</span><span style="left:410px">516</span><span class="G" style="left:450px">S</span><span class="G" style="left:490px">0.0</span><span class="G" style="left:540px">0.0</span><span style="left:590px">0:08.16</span><span style="left:670px">/u</span></div>
<div class="r" style="top:560px"><span style="left:30px">1067</span><span style="left:80px">root</span><span style="left:200px">20</span><span class="G" style="left:250px">0</span><span class="c" style="left:270px">18</span><span style="left:290px">456</span><span class="c" style="left:330px">12</span><span style="left:350px">124</span><span class="c" style="left:390px">10</span><span style="left:410px">284</span><span class="G" style="left:450px">S</span><span class="G" style="left:490px">0.0</span><span class="G" style="left:540px">0.0</span><span style="left:590px">0:01.04</span><span style="left:670px">/u</span></div>
<div class="r" style="top:580px"><span style="left:30px">1070</span><span class="G" style="left:80px">polkitd</span><span style="left:200px">20</span><span class="G" style="left:250px">0</span><span class="c" style="left:280px">299M</span><span class="c" style="left:340px">7</span><span style="left:350px">844</span><span style="left:430px">0</span><span class="G" style="left:450px">S</span><span class="G" style="left:490px">0.0</span><span class="G" style="left:540px">0.0</span><span style="left:590px">0:03.61</span><span class="gr" style="left:670px">/u</span></div>
<div class="r" style="top:600px"><span style="left:30px">1071</span><span class="G" style="left:80px">polkitd</span><span style="left:200px">20</span><span class="G" style="left:250px">0</span><span class="c" style="left:280px">299M</span><span class="c" style="left:340px">7</span><span style="left:350px">844</span><span style="left:430px">0</span><span class="G" style="left:450px">S</span><span class="G" style="left:490px">0.0</span><span class="G" style="left:540px">0.0</span><span class="G" style="left:590px">0:00.00</span><span class="gr" style="left:670px">/u</span></div>
<div class="r" style="top:620px"><span style="left:30px">1072</span><span class="G" style="left:80px">polkitd</span><span style="left:200px">20</span><span class="G" style="left:250px">0</span><span class="c" style="left:280px">299M</span><span class="c" style="left:340px">7</span><span style="left:350px">844</span><span style="left:430px">0</span><span class="G" style="left:450px">S</span><span class="G" style="left:490px">0.0</span><span class="G" style="left:540px">0.0</span><span style="left:590px">0:00.04</span><span class="gr" style="left:670px">/u</span></div>
<div class="r" style="top:640px"><span style="left:30px">1086</span><span style="left:80px">root</span><span style="left:200px">20</span><span class="G" style="left:250px">0</span><span class="c" style="left:280px">309M</span><span class="c" style="left:330px">12</span><span style="left:350px">460</span><span class="c" style="left:390px">10</span><span style="left:410px">524</span><span class="G" style="left:450px">S</span><span class="G" style="left:490px">0.0</span><span class="G" style="left:540px">0.0</span><span style="left:590px">0:00.06</span><span style="left:670px">/u</span></div>
<div class="r" style="top:660px"><span style="left:30px">1112</span><span class="mg" style="left:80px">root</span><span style="left:200px">20</span><span class="G" style="left:250px">0</span><span class="c" style="left:280px">309M</span><span class="c" style="left:330px">12</span><span style="left:350px">460</span><span style="left:430px">0</span><span class="G" style="left:450px">S</span><span class="G" style="left:490px">0.0</span><span class="G" style="left:540px">0.0</span><span class="G" style="left:590px">0:00.00</span><span class="gr" style="left:670px">/u</span></div>
<div class="r" style="top:680px"><span style="left:30px">1114</span><span class="mg" style="left:80px">root</span><span style="left:200px">20</span><span class="G" style="left:250px">0</span><span class="c" style="left:280px">309M</span><span class="c" style="left:330px">12</span><span style="left:350px">460</span><span style="left:430px">0</span><span class="G" style="left:450px">S</span><span class="G" style="left:490px">0.0</span><span class="G" style="left:540px">0.0</span><span class="G" style="left:590px">0:00.00</span><span class="gr" style="left:670px">/u</span></div>
<div class="r" style="top:700px"><span style="left:30px">1116</span><span class="mg" style="left:80px">root</span><span style="left:200px">20</span><span class="G" style="left:250px">0</span><span class="c" style="left:280px">309M</span><span class="c" style="left:330px">12</span><span style="left:350px">460</span><span style="left:430px">0</span><span class="G" style="left:450px">S</span><span class="G" style="left:490px">0.0</span><span class="G" style="left:540px">0.0</span><span style="left:590px">0:00.02</span><span class="gr" style="left:670px">/u</span></div>
<div class="r" style="top:720px"><span style="left:30px">1119</span><span class="mg" style="left:80px">root</span><span style="left:200px">20</span><span class="G" style="left:250px">0</span><span class="c" style="left:280px">328M</span><span class="c" style="left:330px">19</span><span style="left:350px">800</span><span style="left:430px">0</span><span class="G" style="left:450px">S</span><span class="G" style="left:490px">0.0</span><span class="G" style="left:540px">0.0</span><span class="G" style="left:590px">0:00.00</span><span class="gr" style="left:670px">/u</span></div>
<div class="r" style="top:740px"><span style="left:30px">1120</span><span class="mg" style="left:80px">root</span><span style="left:200px">20</span><span class="G" style="left:250px">0</span><span class="c" style="left:280px">328M</span><span class="c" style="left:330px">19</span><span style="left:350px">800</span><span style="left:430px">0</span><span class="G" style="left:450px">S</span><span class="G" style="left:490px">0.0</span><span class="G" style="left:540px">0.0</span><span class="G" style="left:590px">0:00.00</span><span class="gr" style="left:670px">/u</span></div>
<div class="r" style="top:760px"><span style="left:30px">1121</span><span class="mg" style="left:80px">root</span><span style="left:200px">20</span><span class="G" style="left:250px">0</span><span class="c" style="left:280px">328M</span><span class="c" style="left:330px">19</span><span style="left:350px">800</span><span style="left:430px">0</span><span class="G" style="left:450px">S</span><span class="G" style="left:490px">0.0</span><span class="G" style="left:540px">0.0</span><span style="left:590px">0:02.10</span><span class="gr" style="left:670px">/u</span></div>
<div class="r" style="top:780px"><span style="left:30px">3057</span><span style="left:80px">root</span><span style="left:200px">20</span><span class="G" style="left:250px">0</span><span class="c" style="left:270px">11</span><span style="left:290px">768</span><span class="c" style="left:340px">7</span><span style="left:350px">892</span><span class="c" style="left:400px">6</span><span style="left:410px">664</span><span class="G" style="left:450px">S</span><span class="G" style="left:490px">0.0</span><span class="G" style="left:540px">0.0</span><span style="left:590px">0:00.04</span><span style="left:670px">ss</span></div>
<div class="r" style="top:800px"><span style="left:30px">5445</span><span style="left:80px">root</span><span style="left:200px">20</span><span class="G" style="left:250px">0</span><span class="c" style="left:280px">311M</span><span class="c" style="left:330px">11</span><span style="left:350px">072</span><span class="c" style="left:400px">8</span><span style="left:410px">432</span><span class="G" style="left:450px">S</span><span class="G" style="left:490px">0.0</span><span class="G" style="left:540px">0.0</span><span style="left:590px">0:00.12</span><span style="left:670px">/u</span></div>
<div class="r" style="top:820px"><span style="left:30px">5448</span><span style="left:80px">root</span><span style="left:200px">20</span><span class="G" style="left:250px">0</span><span class="c" style="left:280px">311M</span><span class="c" style="left:330px">11</span><span style="left:350px">072</span><span style="left:430px">0</span><span class="G" style="left:450px">S</span><span class="G" style="left:490px">0.0</span><span class="G" style="left:540px">0.0</span><span class="G" style="left:590px">0:00.00</span><span class="gr" style="left:670px">/u</span></div>
<div class="r" style="top:840px"><span style="left:30px">5449</span><span style="left:80px">root</span><span style="left:200px">20</span><span class="G" style="left:250px">0</span><span class="c" style="left:280px">311M</span><span class="c" style="left:330px">11</span><span style="left:350px">072</span><span style="left:430px">0</span><span class="G" style="left:450px">S</span><span class="G" style="left:490px">0.0</span><span class="G" style="left:540px">0.0</span><span class="G" style="left:590px">0:00.00</span><span class="gr" style="left:670px">/u</span></div>
<div class="r" style="top:860px"><span style="left:30px">5450</span><span style="left:80px">root</span><span style="left:200px">20</span><span class="G" style="left:250px">0</span><span class="c" style="left:280px">311M</span><span class="c" style="left:330px">11</span><span style="left:350px">072</span><span style="left:430px">0</span><span class="G" style="left:450px">S</span><span class="G" style="left:490px">0.0</span><span class="G" style="left:540px">0.0</span><span style="left:590px">0:00.02</span><span class="gr" style="left:670px">/u</span></div>
<div class="r" style="top:880px"><span style="left:20px">14548</span><span class="G" style="left:80px">cameron</span><span style="left:200px">20</span><span class="G" style="left:250px">0</span><span class="c" style="left:270px">22</span><span style="left:290px">504</span><span class="c" style="left:330px">12</span><span style="left:350px">652</span><span class="c" style="left:390px">10</span><span style="left:410px">100</span><span class="G" style="left:450px">S</span><span class="G" style="left:490px">0.0</span><span class="G" style="left:540px">0.0</span><span style="left:590px">0:00.15</span><span style="left:670px">/u</span></div>
<div class="r" style="top:900px"><span style="left:20px">14550</span><span class="G" style="left:80px">cameron</span><span style="left:200px">20</span><span class="G" style="left:250px">0</span><span class="c" style="left:270px">23</span><span style="left:290px">024</span><span class="c" style="left:340px">3</span><span style="left:350px">712</span><span class="c" style="left:400px">1</span><span style="left:410px">976</span><span class="G" style="left:450px">S</span><span class="G" style="left:490px">0.0</span><span class="G" style="left:540px">0.0</span><span class="G" style="left:590px">0:00.00</span><span style="left:670px">(s</span></div>
<div class="r" style="top:920px"><span style="left:20px">14569</span><span class="G" style="left:80px">cameron</span><span style="left:200px">20</span><span class="G" style="left:250px">0</span><span class="c" style="left:280px">7</span><span style="left:290px">228</span><span class="c" style="left:340px">3</span><span style="left:350px">744</span><span class="c" style="left:400px">3</span><span style="left:410px">460</span><span class="G" style="left:450px">S</span><span class="G" style="left:490px">0.0</span><span class="G" style="left:540px">0.0</span><span style="left:590px">0:00.01</span><span style="left:670px">/u</span></div>
<div class="r" style="top:940px"><span style="left:20px">14575</span><span class="G" style="left:80px">cameron</span><span style="left:200px">20</span><span class="G" style="left:250px">0</span><span class="c" style="left:280px">8</span><span style="left:290px">332</span><span class="c" style="left:340px">4</span><span style="left:350px">812</span><span class="c" style="left:400px">4</span><span style="left:410px">116</span><span class="G" style="left:450px">S</span><span class="G" style="left:490px">0.0</span><span class="G" style="left:540px">0.0</span><span style="left:590px">0:00.05</span><span style="left:670px">/u</span></div>
<div class="r" style="top:960px"><span style="left:20px">14672</span><span class="G" style="left:80px">cameron</span><span style="left:200px">20</span><span class="G" style="left:250px">0</span><span class="c" style="left:280px">372M</span><span class="c" style="left:340px">7</span><span style="left:350px">372</span><span class="c" style="left:400px">6</span><span style="left:410px">672</span><span class="G" style="left:450px">S</span><span class="G" style="left:490px">0.0</span><span class="G" style="left:540px">0.0</span><span class="G" style="left:590px">0:00.00</span><span style="left:670px">/u</span></div>
<div class="r" style="top:980px"><span style="left:20px">14673</span><span class="G" style="left:80px">cameron</span><span style="left:200px">20</span><span class="G" style="left:250px">0</span><span class="c" style="left:280px">372M</span><span class="c" style="left:340px">7</span><span style="left:350px">372</span><span style="left:430px">0</span><span class="G" style="left:450px">S</span><span class="G" style="left:490px">0.0</span><span class="G" style="left:540px">0.0</span><span class="G" style="left:590px">0:00.00</span><span class="gr" style="left:670px">/u</span></div>
<div class="bg cbg" style="top:1000px;left:20px;width:60px"></div>
<div class="bg cbg" style="top:1000px;left:100px;width:60px"></div>
<div class="bg cbg" style="top:1000px;left:180px;width:60px"></div>
<div class="bg cbg" style="top:1000px;left:260px;width:60px"></div>
<div class="bg cbg" style="top:1000px;left:340px;width:60px"></div>
<div class="bg cbg" style="top:1000px;left:420px;width:60px"></div>
<div class="bg cbg" style="top:1000px;left:500px;width:60px"></div>
<div class="bg cbg" style="top:1000px;left:580px;width:60px"></div>
<div class="bg cbg" style="top:1000px;left:660px;width:30px"></div>
<div class="r" style="top:1000px"><span class="fk" style="left:0px">F1</span><span class="k" style="left:20px">Help</span><span class="fk" style="left:80px">F2</span><span class="k" style="left:100px">Setup</span><span class="fk" style="left:160px">F3</span><span class="k" style="left:180px">Search</span><span class="fk" style="left:240px">F4</span><span class="k" style="left:260px">Filter</span><span class="fk" style="left:320px">F5</span><span class="k" style="left:340px">Tree</span><span class="fk" style="left:400px">F6</span><span class="k" style="left:420px">SortBy</span><span class="fk" style="left:480px">F7</span><span class="k" style="left:500px">Nice -</span><span class="fk" style="left:560px">F8</span><span class="k" style="left:580px">Nice +</span><span class="fk" style="left:640px">F9</span><span class="k" style="left:660px">Kil</span></div>
 </div></div>
</div>

<!-- ======================= taskbar ======================= -->
<div class="abs" id="taskbar" style="left:0;top:1055px;width:1920px;height:25px;background:#333;will-change:transform;overflow:hidden">
 <div class="abs" style="left:0;top:0;width:1920px;height:1px;background:#4c4c4c"></div>
 <div class="abs" style="left:2px;top:2px;width:38px;height:21.500px;background:#353535;border:1px solid #434343;border-right-color:#262626;border-bottom-color:#262626"></div>
 <svg class="abs" style="left:5px;top:3px" width="34" height="19" viewBox="0 0 34 19">
  <path d="M8.600 7.500L11.200 15.500C10 18 6 18.300 2.800 18.200 .5 18.100.800 16 2.500 15.600L5.500 14.800C7 14.300 7.600 12.500 8.600 7.500z" fill="#c4c4c4"/>
  <path d="M13.500 4L17 16.500 18.500 8zM22.500 4l3.200 12 1.500-8.500z" fill="#c8c8c8"/>
  <path d="M8 1h3.700l4.300 16.500h-3.900zM16.300 1H20l4.300 16.500h-3.900zM25.400 1h3.600l3.600 16.500h-3.700z" fill="#dc003c"/>
 </svg>
 <div class="abs" style="left:41px;top:1px;width:2px;height:24px;border-left:1px solid #444;border-right:1px solid #262626"></div>
 <div class="abs" style="left:45.800px;top:20.800px;width:8.400px;height:1.500px;background:#fff"></div>
 <div class="abs" style="left:56px;top:1px;width:2px;height:24px;border-left:1px solid #444;border-right:1px solid #262626"></div>
 <div class="abs" style="left:59px;top:1px;width:40.500px;height:23px;border:1.500px solid #0050a4;background:#333"></div>
 <div class="abs" style="left:60.500px;top:2.500px;width:37.500px;height:19.500px;background:#5a5a5a;border:1px solid #0c0c0c"></div>
 <div class="abs" style="left:62.500px;top:2.500px;width:16px;height:19.500px;background:#5a5a5a;border:1px solid #0c0c0c"></div>
 <div class="abs" style="left:80px;top:2.500px;width:14.500px;height:19.500px;background:#0078d2;border:1px solid #0c0c0c"></div>
 <div class="abs" style="left:99.500px;top:1px;width:1.500px;height:24px;background:#1e1e1e"></div>
 <div class="abs" style="left:140px;top:1px;width:1.500px;height:24px;background:#1e1e1e"></div>
 <div class="abs" style="left:181px;top:1px;width:1.500px;height:24px;background:#1e1e1e"></div>
 <div class="abs tk" style="left:100px;width:40px;text-align:center">2</div>
 <div class="abs tk" style="left:141px;width:40px;text-align:center">3</div>
 <div class="abs tk" style="left:182px;width:40px;text-align:center">4</div>
 <div class="abs" style="left:222px;top:1px;width:256px;height:24px;background:#1b1b1b;border:1px solid #161616;border-right-color:#444;border-bottom-color:#444"></div>
 <svg class="abs" style="left:226px;top:5px" width="15" height="15" viewBox="0 0 17 17"><path d="M0 .8h7.2M10 .8h6.3M0 16.2h6.2M10 16.2h7" stroke="#ff5a00" stroke-width="1.5"/><path d="M2.2 1h3.6l9.6 15h-3.8z" fill="#ff5500"/><path d="M13.2 1.2L3 16" stroke="#ff3a00" stroke-width="1.5"/><path d="M6.4 3C4 2.6 1.4 3.6.6 5.8M10.6 3c2.4-.4 4.6.6 5.4 2.8" stroke="#0020ff" stroke-width="1.400" fill="none"/><rect x="7" y="2.6" width="3" height="12.2" fill="#0000ff"/></svg>
 <div class="abs tk" style="left:244.300px">UXTerm (3)</div>
 <div class="abs" style="left:478px;top:1px;width:256px;height:24px;background:#343434;border:1px solid #4a4a4a;border-right-color:#222;border-bottom-color:#222"></div>
 <svg class="abs" style="left:481px;top:3px" width="19" height="19" viewBox="0 0 20 21"><circle cx="10" cy="10.500" r="9.300" fill="#5b9cf0"/><path d="M10 10.500L1.500 6.500A9.300 9.300 0 0 1 18.500 6.500z" fill="#2f7be5"/><path d="M10 10.500l8.500-4A9.300 9.300 0 0 1 10 19.800z" fill="#8db9f5"/><circle cx="10" cy="10.500" r="5" fill="#fff"/><circle cx="10" cy="10.500" r="3.800" fill="#1a6fe0"/></svg>
 <div class="abs tk" style="left:500.500px;letter-spacing:-.25px">Chromium</div>
 <div class="abs" style="left:1791px;top:2px;width:30px;height:21px;background:#fff"></div>
 <svg class="abs" style="left:1791px;top:2px" width="30" height="21" viewBox="0 0 30 21"><ellipse cx="15" cy="10.500" rx="12.500" ry="9.500" fill="none" stroke="#f3e4e4" stroke-width="1" stroke-dasharray="1 3"/><path d="M14.500 10l6.500 4.500" stroke="#1a8a8a" stroke-width="1.400"/><path d="M11 9.500l3.500.800" stroke="#d04050" stroke-width="1.200"/></svg>
 <div class="abs" style="left:1824.500px;top:-.5px;letter-spacing:-.4px;font:bold 15px/25px 'DejaVu Sans Mono','Liberation Mono',monospace;color:#4a9ae6">EN</div>
 <div class="abs tk" style="left:1852px;letter-spacing:-.45px">9:22 AM</div>
 <div class="abs" id="tb-bottom" style="left:0;top:24px;width:1920px;height:1px;background:#262626"></div>

</div>

</body>
</html>
